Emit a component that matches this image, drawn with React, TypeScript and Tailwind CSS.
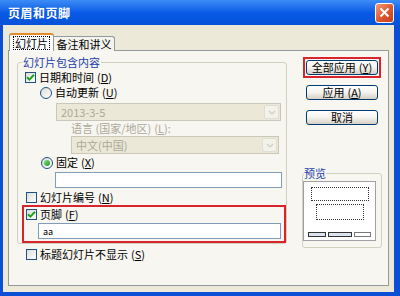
import React from "react";

const font = { fontFamily: '"Noto Sans CJK SC", "Liberation Sans", sans-serif' };

function Key({ k }: { k: string }) {
  return (
    <span className="ml-[3px]">
      (<span className="underline">{k}</span>)
    </span>
  );
}

function Check({ on }: { on?: boolean }) {
  return (
    <span className="w-[11px] h-[11px] shrink-0 border border-[#1c5180] bg-gradient-to-br from-[#dcdcd7] to-white flex items-center justify-center">
      {on && (
        <svg width="9" height="9" viewBox="0 0 9 9">
          <path d="M1 4.2 L3.4 6.6 L8 1.8" stroke="#21a121" strokeWidth="2" fill="none" />
        </svg>
      )}
    </span>
  );
}

function Radio({ on }: { on?: boolean }) {
  return (
    <span className="w-[12px] h-[12px] shrink-0 rounded-full border border-[#1c5180] bg-gradient-to-br from-[#dcdcd7] to-white flex items-center justify-center">
      {on && <span className="w-[6px] h-[6px] rounded-full bg-gradient-to-br from-[#7ee07a] to-[#1f9a1f]" />}
    </span>
  );
}

function Combo({ text, w, ml }: { text: string; w: string; ml: string }) {
  return (
    <div className={`${w} ${ml} h-[18px] border border-[#c9c7ba] bg-[#ebe8d8] flex items-center`}>
      <span className="flex-1 pl-[4px] text-[11px] text-[#aca899] leading-none">{text}</span>
      <span className="w-[15px] h-[14px] mr-px rounded-[2px] bg-[#f2f1ea] border border-[#e0ded2] flex items-center justify-center">
        <svg width="8" height="5" viewBox="0 0 8 5">
          <path d="M1 1 L4 4 L7 1" stroke="#cfcdc0" strokeWidth="1.2" fill="none" />
        </svg>
      </span>
    </div>
  );
}

function Btn({ children }: { children: React.ReactNode }) {
  return (
    <div className="w-[72px] h-[15px] rounded-[3px] border border-[#003c74] bg-gradient-to-b from-white via-[#f4f3ee] to-[#d6d0c5] flex items-center justify-center text-[11px] leading-none text-black">
      {children}
    </div>
  );
}

export default function App() {
  return (
    <div style={font} className="w-[400px] h-[296px] bg-[#0b4fd6] flex flex-col overflow-hidden text-black">
      {/* title bar */}
      <div className="h-[25px] shrink-0 bg-gradient-to-b from-[#3c8cf6] via-[#0a5ae6] to-[#0552d8] flex items-center pl-[8px] pr-[6px]">
        <span className="flex-1 text-white text-[12px] font-bold leading-none tracking-[0.5px]">页眉和页脚</span>
        <span className="w-[19px] h-[20px] rounded-[3px] border border-white bg-gradient-to-br from-[#f29a7a] via-[#e05a32] to-[#c4401c] flex items-center justify-center">
          <svg width="11" height="11" viewBox="0 0 11 11">
            <path d="M1.5 1.5 L9.5 9.5 M9.5 1.5 L1.5 9.5" stroke="white" strokeWidth="2" />
          </svg>
        </span>
      </div>

      {/* body */}
      <div className="flex-1 ml-[3px] mr-[6px] mb-[4px] bg-[#ece9d8] pt-[8px] px-[5px] pb-[6px] flex flex-col">
        {/* tabs */}
        <div className="flex items-end pl-[1px] relative z-10 -mb-px">
          <div className="w-[45px] h-[18px] border border-b-0 border-[#919b9c] rounded-t-[3px] bg-[#fcfcfe] border-t-2 border-t-[#e68b2c] flex items-center justify-center">
            <span className="text-[11px] leading-[12px] px-[1px] border border-dotted border-black">幻灯片</span>
          </div>
          <div className="w-[61px] h-[15px] border border-b-0 border-l-0 border-[#919b9c] rounded-tr-[3px] bg-[#f4f3ee] flex items-center justify-center">
            <span className="text-[11px] leading-none">备注和讲义</span>
          </div>
        </div>

        {/* panel */}
        <div className="flex-1 border border-[#919b9c] bg-[#f7f6f1] pt-[6px] pl-[8px] flex">
          {/* left column */}
          <div className="w-[268px] flex flex-col">
            <fieldset className="border border-[#d0d0bf] rounded-[3px] h-[187px] pt-[2px]">
              <legend className="ml-[4px] px-[1px] text-[11px] leading-[11px] text-[#1b3fa8]">幻灯片包含内容</legend>
              <div className="flex items-center h-[15px] pl-[7px] gap-[3px] text-[11px] leading-none">
                <Check on />
                <span>日期和时间<Key k="D" /></span>
              </div>
              <div className="flex items-center h-[15px] pl-[22px] gap-[3px] text-[11px] leading-none">
                <Radio />
                <span>自动更新<Key k="U" /></span>
              </div>
              <div className="mt-[3px]">
                <Combo text="2013-3-5" w="w-[225px]" ml="ml-[38px]" />
              </div>
              <div className="h-[15px] ml-[53px] flex items-center text-[11px] leading-none text-[#aca899]">
                语言 (国家/地区)<Key k="L" />:
              </div>
              <Combo text="中文(中国)" w="w-[208px]" ml="ml-[53px]" />
              <div className="flex items-center h-[15px] mt-px pl-[23px] gap-[3px] text-[11px] leading-none">
                <Radio on />
                <span>固定<Key k="X" /></span>
              </div>
              <div className="mt-[2px] ml-[37px] w-[227px] h-[16px] border border-[#7f9db9] bg-white" />
              <div className="flex items-center h-[14px] mt-[2px] pl-[8px] gap-[3px] text-[11px] leading-none">
                <Check />
                <span>幻灯片编号<Key k="N" /></span>
              </div>
              <div className="ml-[4px] mt-px w-[264px] border-2 border-[#d9242c] pb-[2px]">
                <div className="flex items-center h-[14px] pl-[2px] gap-[3px] text-[11px] leading-none">
                  <Check on />
                  <span>页脚<Key k="F" /></span>
                </div>
                <div className="mt-[2px] ml-[14px] w-[243px] h-[16px] border border-[#7f9db9] bg-white flex items-center pl-[4px] text-[9px] leading-none">
                  aa
                </div>
              </div>
            </fieldset>
            <div className="flex items-center h-[14px] mt-[3px] pl-[9px] gap-[3px] text-[11px] leading-none">
              <Check />
              <span>标题幻灯片不显示<Key k="S" /></span>
            </div>
          </div>

          {/* right column */}
          <div className="ml-[18px] w-[79px] flex flex-col">
            <div className="w-[78px] border-2 border-[#d9242c] p-px">
              <Btn>全部应用<Key k="Y" /></Btn>
            </div>
            <div className="mt-[7px] ml-[3px]">
              <Btn>应用<Key k="A" /></Btn>
            </div>
            <div className="mt-[10px] ml-[3px]">
              <Btn>取消</Btn>
            </div>
            <fieldset className="mt-[43px] -ml-px border border-[#d0d0bf] rounded-[3px] pb-[6px]">
              <legend className="ml-px text-[11px] leading-[11px] text-[#1b3fa8]">预览</legend>
              <div className="mt-[2px] w-[73px] h-[60px] border border-[#a0a0a0] bg-white flex flex-col items-center pt-[5px]">
                <div className="w-[58px] h-[14px] border border-dotted border-[#333]" />
                <div className="mt-[3px] w-[48px] h-[16px] border border-dotted border-[#333]" />
                <div className="mt-auto mb-[3px] flex gap-[2px]">
                  <div className="w-[18px] h-[5px] border border-[#333] bg-[#dbe4ee]" />
                  <div className="w-[24px] h-[5px] border border-[#333] bg-[#dbe4ee]" />
                  <div className="w-[17px] h-[5px] border border-[#777] bg-white" />
                </div>
              </div>
            </fieldset>
          </div>
        </div>
      </div>
    </div>
  );
}
